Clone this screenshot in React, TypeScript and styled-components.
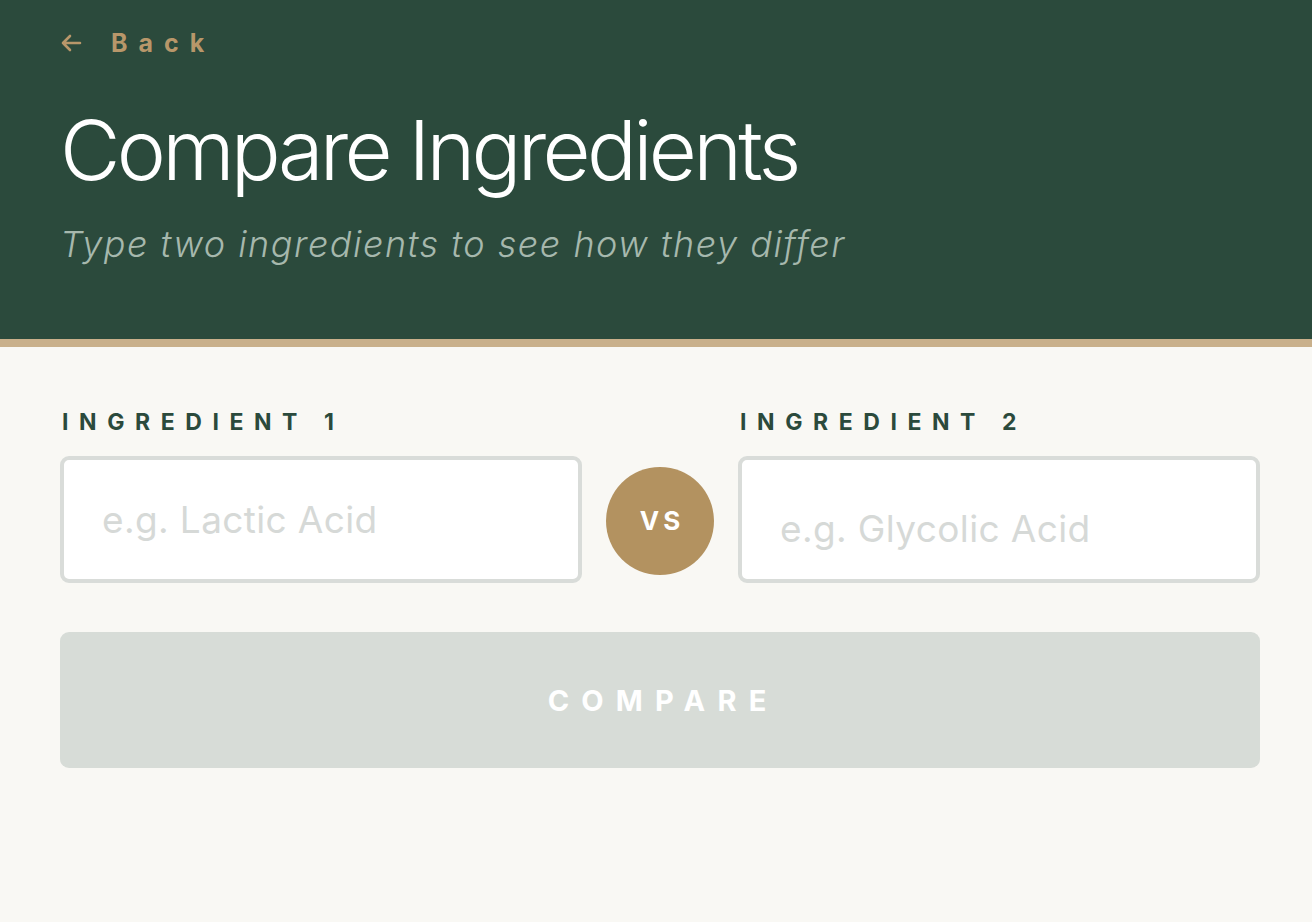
import React from "react";
import styled, { createGlobalStyle } from "styled-components";

const Global = createGlobalStyle`
  html, body { margin: 0; padding: 0; background: #f9f8f4; }
  body { font-family: Inter, "Noto Sans", sans-serif; }
  * { box-sizing: border-box; }
`;

const Page = styled.div`
  min-height: 922px;
  background: #f9f8f4;
`;

const Header = styled.header`
  background: #2b4a3c;
  border-bottom: 8px solid #c9b08b;
  padding: 28px 60px 0;
  height: 347px;
`;

const BackLink = styled.a`
  display: inline-flex;
  align-items: center;
  gap: 29px;
  color: #b8976a;
  font-family: Inter, sans-serif;
  font-weight: 700;
  font-size: 25px;
  letter-spacing: 0.44em;
  text-decoration: none;
  cursor: pointer;
  svg { flex: none; }
`;

const Title = styled.h1`
  margin: 51px 0 0;
  color: #ffffff;
  font-family: Inter, sans-serif;
  font-weight: 300;
  font-size: 83px;
  line-height: 1;
  letter-spacing: -0.045em;
`;

const Subtitle = styled.p`
  margin: 34px 0 0;
  color: #a6b8ad;
  font-family: Inter, sans-serif;
  font-style: italic;
  font-weight: 300;
  font-size: 36px;
  line-height: 1;
  letter-spacing: 0.042em;
`;

const Main = styled.main`
  padding: 64px 52px 0 60px;
`;

const Row = styled.div`
  display: flex;
  align-items: flex-end;
  gap: 24px;
`;

const Field = styled.label`
  flex: 1;
  display: flex;
  flex-direction: column;
  gap: 22px;
`;

const Label = styled.span`
  color: #2b4a3c;
  font-weight: 700;
  font-size: 23px;
  letter-spacing: 0.46em;
  line-height: 1;
  padding-left: 2px;
`;

const Input = styled.input<{ $pt: number }>`
  width: 100%;
  height: 127px;
  border: 4px solid #d9dcd9;
  border-radius: 9px;
  background: #ffffff;
  padding: ${(p) => p.$pt}px 38px 0;
  font-family: Inter, sans-serif;
  font-size: 37px;
  letter-spacing: 0.01em;
  color: #2b4a3c;
  outline: none;
  &::placeholder { color: #d6d9d7; }
`;

const VsCol = styled.div`
  height: 127px;
  display: flex;
  align-items: center;
`;

const Vs = styled.div`
  width: 108px;
  height: 108px;
  border-radius: 50%;
  background: #b39260;
  color: #fff;
  display: flex;
  align-items: center;
  justify-content: center;
  font-weight: 700;
  font-size: 26px;
  letter-spacing: 0.16em;
  padding-left: 0.16em;
  margin-top: 2px;
`;

const CompareButton = styled.button`
  margin-top: 49px;
  width: 100%;
  height: 136px;
  border: none;
  border-radius: 9px;
  background: #d7dcd7;
  color: #ffffff;
  font-family: Inter, sans-serif;
  font-weight: 700;
  font-size: 29px;
  letter-spacing: 0.42em;
  padding-left: 0.42em;
  cursor: not-allowed;
`;

export default function App() {
  return (
    <Page>
      <Global />
      <Header>
        <BackLink>
          <svg width="22" height="20" viewBox="0 0 22 20" fill="none" stroke="#b8976a" strokeWidth="2.6" strokeLinecap="round" strokeLinejoin="round">
            <path d="M20 10H3M10 3L3 10l7 7" />
          </svg>
          Back
        </BackLink>
        <Title>Compare Ingredients</Title>
        <Subtitle>Type two ingredients to see how they differ</Subtitle>
      </Header>
      <Main>
        <Row>
          <Field>
            <Label>INGREDIENT 1</Label>
            <Input $pt={0} placeholder="e.g. Lactic Acid" />
          </Field>
          <VsCol>
            <Vs>VS</Vs>
          </VsCol>
          <Field>
            <Label>INGREDIENT 2</Label>
            <Input $pt={18} placeholder="e.g. Glycolic Acid" />
          </Field>
        </Row>
        <CompareButton disabled>COMPARE</CompareButton>
      </Main>
    </Page>
  );
}
